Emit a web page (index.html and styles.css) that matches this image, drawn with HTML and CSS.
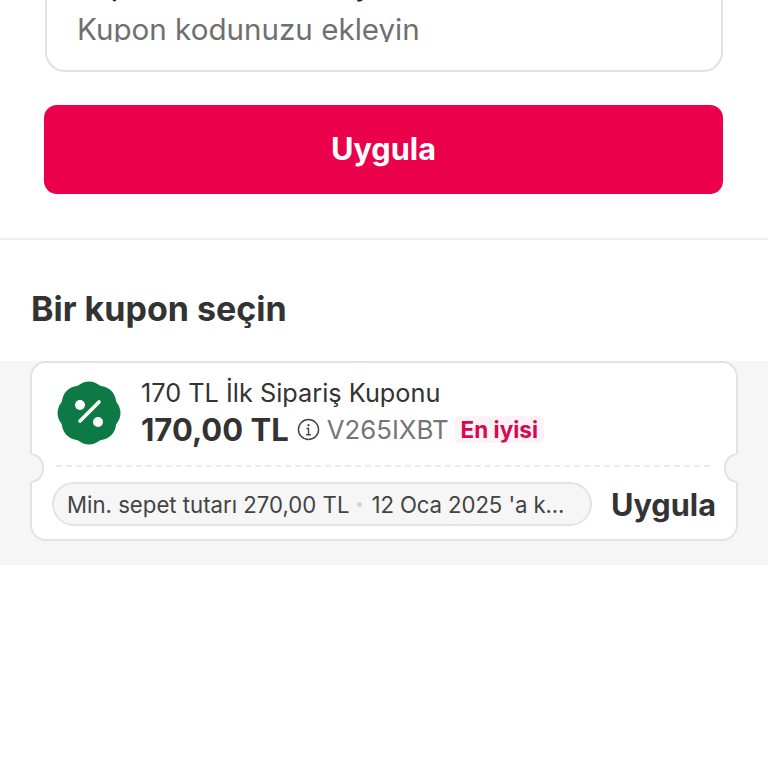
FILE: index.html
```html
<!DOCTYPE html>
<html lang="tr">
<head>
<meta charset="utf-8">
<title>Kupon</title>
<link rel="stylesheet" href="styles.css">
</head>
<body>
<main class="page">
  <section class="entry">
    <div class="field">
      <div class="field-label">Kupon kodunuzu ekleyin</div>
      <div class="field-clip"><span class="field-input">Kupon kodunuzu ekleyin</span></div>
    </div>
    <button class="apply-btn">Uygula</button>
  </section>
  <h2 class="list-title">Bir kupon seçin</h2>
  <section class="band">
    <article class="coupon">
      <div class="coupon-top">
        <svg class="badge" viewBox="0 0 64 64" aria-hidden="true">
          <path fill="#0d7a45" d="M20.710 4.750Q32 -3.750 43.290 4.750Q57.280 6.720 59.250 20.710Q67.750 32 59.250 43.290Q57.280 57.280 43.290 59.250Q32 67.750 20.710 59.250Q6.720 57.280 4.750 43.290Q-3.750 32 4.750 20.710Q6.720 6.720 20.710 4.750Z"/>
          <circle cx="23" cy="24" r="5" fill="#fff"/>
          <circle cx="41" cy="41" r="5" fill="#fff"/>
          <path d="M23 40L42 21" stroke="#fff" stroke-width="3.600" stroke-linecap="round" fill="none"/>
        </svg>
        <div class="coupon-info">
          <div class="coupon-name">170 TL İlk Sipariş Kuponu</div>
          <div class="coupon-line">
            <span class="amount">170,00 TL</span>
            <svg class="info" viewBox="0 0 24 24" aria-hidden="true">
              <circle cx="12" cy="12" r="10.500" fill="none" stroke="#444" stroke-width="1.500"/>
              <circle cx="12" cy="7.500" r="1.200" fill="#444"/>
              <path d="M10 11h2v6.500M9.500 17.500h5" fill="none" stroke="#444" stroke-width="1.400"/>
            </svg>
            <span class="code">V265IXBT</span>
            <span class="best">En iyisi</span>
          </div>
        </div>
      </div>
      <div class="perforation"></div>
      <div class="coupon-bottom">
        <div class="terms">Min. sepet tutarı 270,00 TL<span class="dot"></span><span class="terms-date">12 Oca 2025 'a k...</span></div>
        <span class="coupon-apply">Uygula</span>
      </div>
      <span class="notch notch-left"></span>
      <span class="notch notch-right"></span>
    </article>
  </section>
</main>
</body>
</html>
```
FILE: styles.css
```css
* { box-sizing: border-box; }
html, body { margin: 0; padding: 0; background: #fff; }
body { width: 768px; height: 768px; overflow: hidden; font-family: Inter, "Liberation Sans", sans-serif; }
.page { display: flex; flex-direction: column; }
.entry { display: flex; flex-direction: column; gap: 33px; padding: 0 45px 44px 44px; border-bottom: 2px solid #eeeeee; margin-top: -40px; }
.field { height: 112px; margin: 0 0 0 1px; padding: 0 0 0 30px; border: 2px solid #e2e2e2; border-top-color: #e6e6e6; border-radius: 20px; background: #fff; display: flex; flex-direction: column; }
.field-label { height: 36px; font-size: 27px; line-height: 34px; color: #222; overflow: hidden; flex: none; font-weight: 500; white-space: nowrap; margin-top: 8px; margin-bottom: -2px; }
.field-clip { height: 38px; overflow: hidden; flex: none; }
.field-input { display: block; font-size: 29.600px; line-height: 52px; margin-top: -1px; color: #6f6f6f; white-space: nowrap; }
.apply-btn { height: 89px; border: 0; border-radius: 13px; background: #ea004b; color: #fff; font: 700 30.700px/1 Inter, "Liberation Sans", sans-serif; }
.list-title { margin: 0; padding: 49px 31px 32px; font: 700 34px/40px Inter, "Liberation Sans", sans-serif; color: #333; }
.band { background: #f6f6f6; height: 204px; padding: 0 30px; }
.coupon { position: relative; height: 180px; background: #fff; border: 2px solid #e3e3e3; border-radius: 16px; display: flex; flex-direction: column; }
.coupon-top { height: 102px; flex: none; display: flex; align-items: flex-start; padding: 18px 0 0 25px; gap: 20px; }
.badge { width: 64px; height: 64px; flex: none; }
.coupon-info { display: flex; flex-direction: column; }
.coupon-name { font-size: 25.300px; line-height: 30px; color: #333; margin-top: -3px; white-space: nowrap; }
.coupon-line { display: flex; align-items: center; gap: 8px; height: 42px; white-space: nowrap; }
.amount { font-size: 31px; font-weight: 700; color: #333; }
.info { width: 23px; height: 23px; flex: none; }
.code { font-size: 25.800px; color: #757575; margin-left: -1px; margin-right: -2px; }
.best { font-size: 22.500px; font-weight: 700; color: #d6084f; background: #fdf2f6; border-radius: 5px; padding: 0 6px; line-height: 27px; }
.perforation { height: 0; margin: 0 26px 0 24px; border-top: 2px dashed #ececec; flex: none; }
.coupon-bottom { display: flex; align-items: center; padding: 15px 20px 0 20px; justify-content: space-between; }
.terms { width: 540px; height: 44px; border: 2px solid #e4e4e4; border-radius: 22px; background: #f6f6f6; display: flex; align-items: center; padding-left: 13px; font-size: 22.200px; color: #444; white-space: nowrap; }
.terms-date { letter-spacing: -0.1px; }
.dot { width: 5px; height: 5px; border-radius: 50%; background: #d5d5d5; margin: 0 9px 0 8px; flex: none; }
.coupon-apply { font-size: 30.700px; font-weight: 700; color: #333; }
.notch { position: absolute; top: 90px; width: 14px; height: 30px; background: #f6f6f6; border: 2px solid #e3e3e3; }
.notch-left { left: -2px; border-left-color: #f6f6f6; border-radius: 0 15px 15px 0; }
.notch-right { right: -2px; border-right-color: #f6f6f6; border-radius: 15px 0 0 15px; }
```
